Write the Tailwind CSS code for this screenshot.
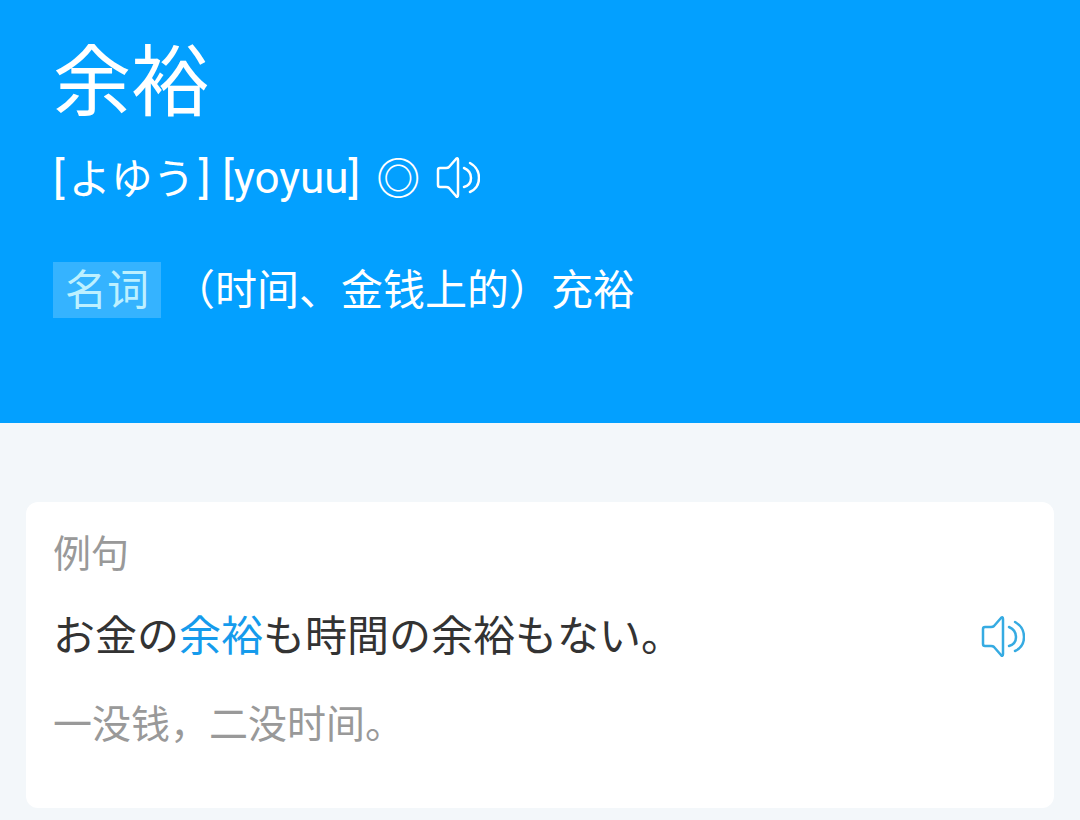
<!DOCTYPE html>
<html lang="zh-CN">
<head>
    <meta charset="UTF-8">
    <meta name="viewport" content="width=device-width, initial-scale=1.0">
    <title>余裕</title>
    <script src="https://cdn.jsdelivr.net/npm/@tailwindcss/browser@4"></script>
</head>
<body class="min-h-screen bg-[#f3f7fa] font-['Noto_Sans_CJK_SC',sans-serif]">

    <!-- Headword -->
    <header class="bg-[#03a0ff] text-white px-[53px] pt-7 pb-[105px]">
        <h1 lang="ja" class="text-[78px] leading-[96px]">余裕</h1>

        <div class="mt-[26px] h-14 flex items-center text-[44px] leading-[56px] font-[Roboto,sans-serif]">
            <span class="flex items-center">[<span lang="ja" class="px-1 pb-1 text-[42px] font-['Noto_Sans_CJK_JP',sans-serif]">よゆう</span>]</span>
            <span class="ml-3">[yoyuu]</span>
            <span class="ml-4 pb-1 font-medium font-['Noto_Sans_CJK_JP',sans-serif]">◎</span>
            <button type="button" aria-label="播放发音" class="ml-4">
                <svg class="w-11 h-11" viewBox="0 0 44 44" fill="none" stroke="currentColor" stroke-width="2.5" stroke-linecap="round" stroke-linejoin="round">
                    <path d="M10 12H4Q2 12 2 14V29Q2 31 4 31H10Q12 31 13 32L20 40Q22 42 22 39V4Q22 1 20 3L13 11Q12 12 10 12Z"/>
                    <path d="M28 12Q35 15 35 22T28 31"/>
                    <path d="M34 7Q43 12 43 22T34 36"/>
                </svg>
            </button>
        </div>

        <div class="mt-14 flex items-center text-[42px] leading-[50px]">
            <span class="px-3 pb-1.5 bg-white/20 text-[#bdf0ff]">名词</span>
            <p class="ml-3 pb-1.5">（时间、金钱上的）充裕</p>
        </div>
    </header>

    <!-- Example sentences -->
    <main class="px-[26px] pt-[79px] pb-3">
        <section class="bg-white rounded-xl px-[27px] pt-[21px] pb-[59px]">
            <h2 class="text-[38px] leading-[56px] text-[#999999]">例句</h2>
            <div class="mt-[26px] flex items-center justify-between">
                <p lang="ja" class="text-[42px] leading-[56px] text-[#333333] font-['Noto_Sans_CJK_JP',sans-serif]">お金の<span class="text-[#159bec]">余裕</span>も時間の余裕もない。</p>
                <button type="button" aria-label="播放例句" class="pt-2 mr-0.5 text-[#36abe2]">
                    <svg class="w-11 h-11" viewBox="0 0 44 44" fill="none" stroke="currentColor" stroke-width="2.5" stroke-linecap="round" stroke-linejoin="round">
                        <path d="M10 12H4Q2 12 2 14V29Q2 31 4 31H10Q12 31 13 32L20 40Q22 42 22 39V4Q22 1 20 3L13 11Q12 12 10 12Z"/>
                        <path d="M28 12Q35 15 35 22T28 31"/>
                        <path d="M34 7Q43 12 43 22T34 36"/>
                    </svg>
                </button>
            </div>
            <p class="mt-8 text-[39px] leading-[56px] text-[#999999]">一没钱，二没时间。</p>
        </section>
    </main>

</body>
</html>
